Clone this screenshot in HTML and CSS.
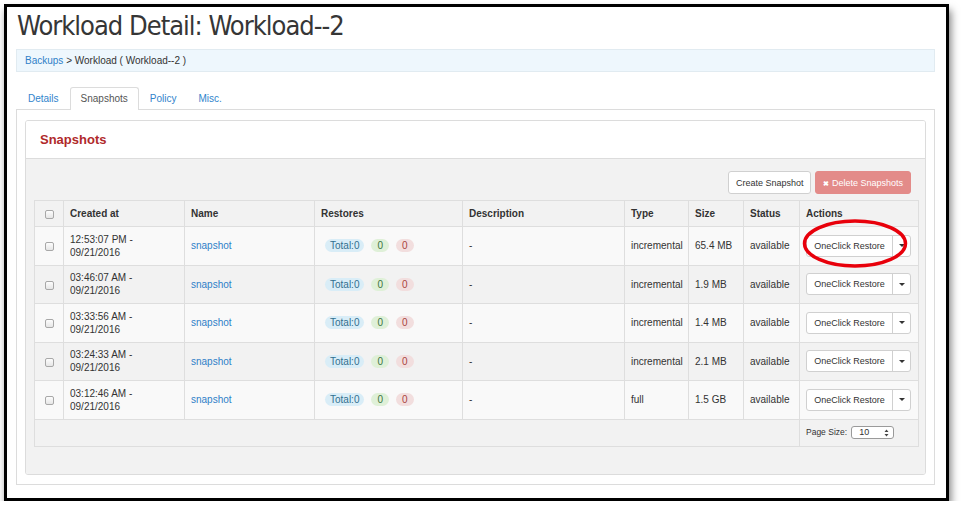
FILE: index.html
```html
<!DOCTYPE html>
<html>
<head>
<meta charset="utf-8">
<link rel="stylesheet" href="styles.css">
</head>
<body>
<div class="frame">
  <h1 class="title">Workload Detail: Workload--2</h1>
  <div class="crumb"><a class="link">Backups</a> &gt; Workload ( Workload--2 )</div>
  <ul class="tabs">
    <li class="tab">Details</li>
    <li class="tab active">Snapshots</li>
    <li class="tab">Policy</li>
    <li class="tab">Misc.</li>
  </ul>
  <div class="tab-content">
    <div class="panel">
      <div class="panel-head">Snapshots</div>
      <div class="panel-body">
        <div class="toolbar">
          <button class="btn">Create Snapshot</button>
          <button class="btn btn-danger"><span class="x">&#x2716;</span> Delete Snapshots</button>
        </div>
        <table class="grid">
          <colgroup>
            <col class="c-chk"><col class="c-created"><col class="c-name"><col class="c-rest"><col class="c-desc"><col class="c-type"><col class="c-size"><col class="c-status"><col class="c-act">
          </colgroup>
          <thead>
            <tr><th><span class="chk"></span></th><th>Created at</th><th>Name</th><th>Restores</th><th>Description</th><th>Type</th><th>Size</th><th>Status</th><th>Actions</th></tr>
          </thead>
          <tbody>
            <tr class="odd"><td><span class="chk"></span></td><td>12:53:07 PM -<br>09/21/2016</td><td><a class="link">snapshot</a></td><td><span class="badge b-info">Total:0</span><span class="badge b-ok">0</span><span class="badge b-err">0</span></td><td>-</td><td>incremental</td><td>65.4 MB</td><td>available</td><td><div class="bgroup"><span class="bmain">OneClick Restore</span><span class="bcaret"><span class="caret"></span></span></div></td></tr>
            <tr><td><span class="chk"></span></td><td>03:46:07 AM -<br>09/21/2016</td><td><a class="link">snapshot</a></td><td><span class="badge b-info">Total:0</span><span class="badge b-ok">0</span><span class="badge b-err">0</span></td><td>-</td><td>incremental</td><td>1.9 MB</td><td>available</td><td><div class="bgroup"><span class="bmain">OneClick Restore</span><span class="bcaret"><span class="caret"></span></span></div></td></tr>
            <tr class="odd"><td><span class="chk"></span></td><td>03:33:56 AM -<br>09/21/2016</td><td><a class="link">snapshot</a></td><td><span class="badge b-info">Total:0</span><span class="badge b-ok">0</span><span class="badge b-err">0</span></td><td>-</td><td>incremental</td><td>1.4 MB</td><td>available</td><td><div class="bgroup"><span class="bmain">OneClick Restore</span><span class="bcaret"><span class="caret"></span></span></div></td></tr>
            <tr><td><span class="chk"></span></td><td>03:24:33 AM -<br>09/21/2016</td><td><a class="link">snapshot</a></td><td><span class="badge b-info">Total:0</span><span class="badge b-ok">0</span><span class="badge b-err">0</span></td><td>-</td><td>incremental</td><td>2.1 MB</td><td>available</td><td><div class="bgroup"><span class="bmain">OneClick Restore</span><span class="bcaret"><span class="caret"></span></span></div></td></tr>
            <tr class="odd"><td><span class="chk"></span></td><td>03:12:46 AM -<br>09/21/2016</td><td><a class="link">snapshot</a></td><td><span class="badge b-info">Total:0</span><span class="badge b-ok">0</span><span class="badge b-err">0</span></td><td>-</td><td>full</td><td>1.5 GB</td><td>available</td><td><div class="bgroup"><span class="bmain">OneClick Restore</span><span class="bcaret"><span class="caret"></span></span></div></td></tr>
          </tbody>
          <tfoot>
            <tr><td colspan="8"></td><td><div class="pagesize">Page Size: <span class="select"><span>10</span><svg width="5" height="8" viewBox="0 0 5 8"><path d="M2.5 0.5 L4.5 3 L0.5 3 Z M2.5 7.5 L4.5 5 L0.5 5 Z" fill="#444"/></svg></span></div></td></tr>
          </tfoot>
        </table>
      </div>
    </div>
  </div>
  <svg class="ring" width="110" height="52" viewBox="0 0 110 52"><ellipse cx="55" cy="25.5" rx="50.5" ry="22.5" fill="none" stroke="#e8000b" stroke-width="3.5"/></svg>
</div>
</body>
</html>
```
FILE: styles.css
```css
body {
  margin: 0;
  background: #fff;
  font-family: "Liberation Sans", Arial, sans-serif;
  font-size: 10px;
  color: #333;
}
.frame {
  position: relative;
  box-sizing: border-box;
  width: 945px;
  height: 497px;
  margin: 4px 0 0 4px;
  padding: 0 11px 0 9px;
  border: 3px solid #000;
  background: #fff;
  box-shadow: 2px 6px 8px rgba(0, 0, 0, 0.5);
}
.title {
  margin: 0;
  padding: 2px 0 0 1px;
  font-family: "DejaVu Sans Condensed", "Liberation Sans", sans-serif;
  font-weight: 400;
  font-size: 27px;
  letter-spacing: -1px;
  line-height: 34px;
  color: #363636;
}
.link { color: #2f7fc8; text-decoration: none; }
.crumb {
  box-sizing: border-box;
  height: 23px;
  margin-top: 6px;
  padding-left: 8px;
  border: 1px solid #e1ebf1;
  background: #eef7fd;
  line-height: 21px;
  font-size: 10px;
  color: #333;
}
.tabs {
  display: flex;
  margin: 15px 0 -1px 1px;
  padding: 0;
  list-style: none;
  position: relative;
  z-index: 1;
}
.tab {
  padding: 0 10px;
  height: 21px;
  line-height: 21px;
  border: 1px solid transparent;
  border-bottom: 0;
  color: #3184cc;
}
.tab.active {
  height: 22px;
  background: #fff;
  border-color: #dcdcdc;
  border-radius: 3px 3px 0 0;
  color: #555;
}
.tab-content {
  box-sizing: border-box;
  height: 376px;
  padding: 10px 8px 0 8px;
  border: 1px solid #dcdcdc;
  background: #fff;
}
.panel {
  box-sizing: border-box;
  height: 355px;
  display: flex;
  flex-direction: column;
  border: 1px solid #dcdcdc;
  border-radius: 3px;
  overflow: hidden;
}
.panel-head {
  height: 37px;
  line-height: 37px;
  padding-left: 14px;
  border-bottom: 1px solid #dcdcdc;
  background: #fff;
  font-size: 13px;
  font-weight: 700;
  color: #b0292a;
}
.panel-body {
  flex: 1;
  background: #f2f2f2;
  padding: 12px 7px 0 8px;
}
.toolbar {
  display: flex;
  justify-content: flex-end;
  gap: 4px;
  margin-right: 7px;
}
.btn {
  box-sizing: border-box;
  height: 23px;
  padding: 0 7px;
  border: 1px solid #d0d0d0;
  border-radius: 3px;
  background: #fff;
  font-family: "Liberation Sans", Arial, sans-serif;
  font-size: 9px;
  color: #333;
}
.btn-danger {
  background: #e38b89;
  border-color: #e38b89;
  color: #fff;
  padding: 0 7px;
}
.btn-danger .x { font-size: 7px; font-weight: 700; }
.grid {
  margin-top: 6px;
  width: 884px;
  table-layout: fixed;
  border-collapse: collapse;
  font-size: 10px;
  color: #333;
}
.c-chk { width: 29px; }
.c-created { width: 121px; }
.c-name { width: 130px; }
.c-rest { width: 148px; }
.c-desc { width: 162px; }
.c-type { width: 64px; }
.c-size { width: 55px; }
.c-status { width: 56px; }
.c-act { width: 119px; }
.grid th, .grid td {
  border: 1px solid #dedede;
  padding: 0 6px;
  text-align: left;
  vertical-align: middle;
  line-height: 13px;
  white-space: nowrap;
}
.grid thead tr { height: 26px; }
.grid th { font-weight: 700; }
.grid tbody tr { height: 38.5px; }
.grid tbody tr.odd { background: #f9f9f9; }
.grid tfoot tr { height: 27px; }
.grid th:first-child, .grid tbody td:first-child { padding: 0; text-align: center; }
.chk {
  display: inline-block;
  box-sizing: border-box;
  width: 9px;
  height: 9px;
  border: 1px solid #a8a8a8;
  border-radius: 2px;
  background: linear-gradient(#fdfdfd, #e6e6e6);
  vertical-align: middle;
}
.badge {
  display: inline-block;
  height: 13px;
  line-height: 13px;
  padding: 0 6px;
  margin: 0 3px 0 4px;
  border-radius: 7px;
}
.badge + .badge { margin-left: 4px; }
.badge.b-info { padding: 0 5px; background: #d9edf7; color: #31708f; }
.b-ok { background: #dff0d8; color: #3c763d; }
.b-err { background: #f2dede; color: #a94442; }
.bgroup {
  display: flex;
  width: 105px;
  height: 22px;
  box-sizing: border-box;
  border: 1px solid #d0d0d0;
  border-radius: 3px;
  background: #fff;
  font-size: 9px;
}
.bmain {
  width: 85px;
  text-align: center;
  line-height: 20px;
  border-right: 1px solid #d0d0d0;
}
.bcaret {
  flex: 1;
  display: flex;
  align-items: center;
  justify-content: center;
}
.caret {
  width: 0;
  height: 0;
  border-left: 3px solid transparent;
  border-right: 3px solid transparent;
  border-top: 3px solid #333;
}
.pagesize {
  display: flex;
  align-items: center;
  gap: 4px;
  font-size: 8.5px;
  color: #333;
}
.select {
  box-sizing: border-box;
  width: 43px;
  height: 13px;
  display: flex;
  align-items: center;
  justify-content: space-between;
  padding: 0 4px 0 7px;
  border: 1px solid #9a9a9a;
  border-radius: 3px;
  background: #fff;
  font-size: 9px;
}
.ring {
  position: absolute;
  left: 793px;
  top: 211px;
}
```
